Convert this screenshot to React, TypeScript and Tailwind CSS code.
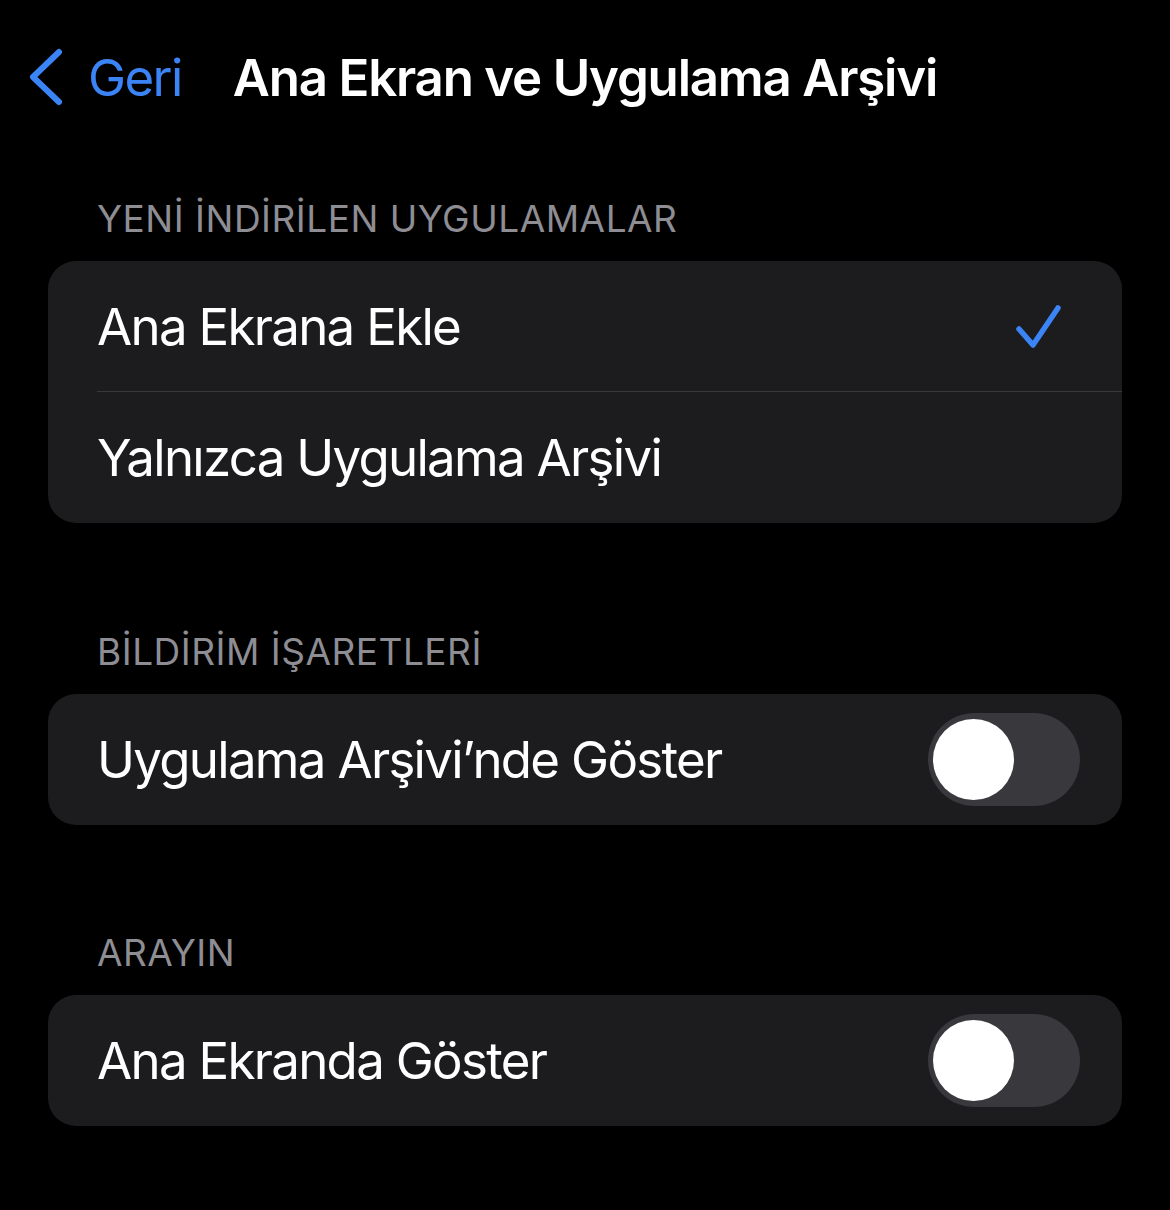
import React from "react";

const font = { fontFamily: "Inter, 'Noto Sans', sans-serif" };

function Check() {
  return (
    <svg width="48" height="48" viewBox="0 0 48 48" fill="none">
      <path
        d="M5 27 L19 43 L44 6"
        stroke="#3a84f5"
        strokeWidth="5.5"
        strokeLinecap="round"
        strokeLinejoin="round"
      />
    </svg>
  );
}

function Toggle() {
  return (
    <div className="flex h-[93px] w-[152px] items-center rounded-full bg-[#39393d] px-[5px]">
      <div className="h-[81px] w-[81px] rounded-full bg-white" />
    </div>
  );
}

function SectionHeader({ label }: { label: string }) {
  return (
    <div className="px-[97px] pb-[20px] text-[37px] leading-[44px] text-[#8d8d93] tracking-[0.5px]">
      {label}
    </div>
  );
}

function Row({
  label,
  right,
  divider,
}: {
  label: string;
  right?: React.ReactNode;
  divider?: boolean;
}) {
  return (
    <div className="pl-[49px]">
      <div
        className={
          "flex h-[131px] items-center justify-between" +
          (divider ? " border-b border-[#38383a]" : "")
        }
      >
        <span className="text-[51px] leading-none text-white tracking-[-1.7px]">{label}</span>
        {right}
      </div>
    </div>
  );
}

export default function App() {
  return (
    <div className="min-h-[1210px] w-full bg-black" style={font}>
      {/* nav bar */}
      <div className="grid h-[156px] grid-cols-[1fr_auto_1fr] items-center pb-[2px]">
        <div className="flex items-center gap-[24px] pl-[28px] text-[#3a84f5]">
          <svg width="36" height="58" viewBox="0 0 36 58" fill="none">
            <path
              d="M31 4 L5 29 L31 54"
              stroke="#3a84f5"
              strokeWidth="6"
              strokeLinecap="round"
              strokeLinejoin="round"
            />
          </svg>
          <span className="text-[51px] leading-none tracking-[-1.6px]">Geri</span>
        </div>
        <h1 className="text-[51px] font-semibold leading-none text-white tracking-[-1.2px]">
          Ana Ekran ve Uygulama Arşivi
        </h1>
        <div />
      </div>

      <div className="pt-[41px]">
        <SectionHeader label="YENİ İNDİRİLEN UYGULAMALAR" />
        <div className="mx-[48px] overflow-hidden rounded-[28px] bg-[#1c1c1e]">
          <Row
            label="Ana Ekrana Ekle"
            divider
            right={
              <div className="pr-[60px]">
                <Check />
              </div>
            }
          />
          <Row label="Yalnızca Uygulama Arşivi" />
        </div>

        <div className="pt-[107px]">
          <SectionHeader label="BİLDİRİM İŞARETLERİ" />
          <div className="mx-[48px] rounded-[28px] bg-[#1c1c1e]">
            <Row
              label="Uygulama Arşivi’nde Göster"
              right={
                <div className="pr-[42px]">
                  <Toggle />
                </div>
              }
            />
          </div>
        </div>

        <div className="pt-[106px]">
          <SectionHeader label="ARAYIN" />
          <div className="mx-[48px] rounded-[28px] bg-[#1c1c1e]">
            <Row
              label="Ana Ekranda Göster"
              right={
                <div className="pr-[42px]">
                  <Toggle />
                </div>
              }
            />
          </div>
        </div>
      </div>
    </div>
  );
}
